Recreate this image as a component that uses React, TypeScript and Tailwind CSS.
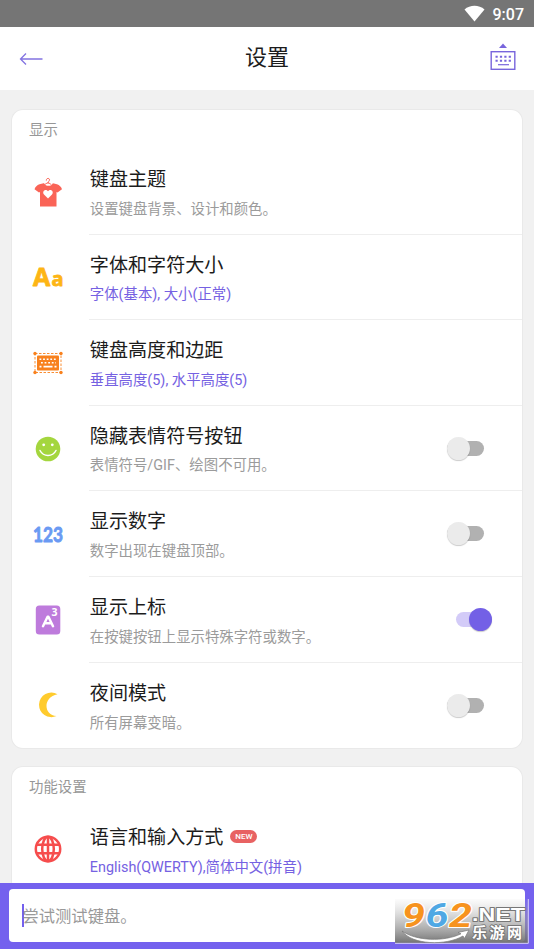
import { useState } from 'react';
import type { ReactNode } from 'react';

interface SettingItem {
  id: string;
  title: string;
  description: string;
  icon: ReactNode;
  highlighted?: boolean;
  toggle?: boolean;
  isNew?: boolean;
}

function ShirtIcon() {
  return (
    <svg width="28" height="30" viewBox="0 0 28 30">
      <path d="M12.300 3.200c0-2.600 3.400-2.400 3.200-.2-.1 1.200-1.500 1.300-1.500 3.400" fill="none" stroke="#fa6457" strokeWidth="1" strokeLinecap="round" />
      <path d="M9.600 6.200 5.500 7.200C3 8 1.300 9.800.5 12.300l4.500 3.200 1-.5V29.500h16.500V15l1 .5 4.500-3.200c-.8-2.500-2.500-4.300-5-5.100l-4.100-1c-1.400 3.400-7.400 3.400-8.800 0Z" fill="#fa6457" />
      <path d="M10.700 7.500 14 5.500l3.300 2" fill="none" stroke="#fa6457" strokeWidth=".9" />
      <path d="m14 21.500-4-4c-2.500-3.300 1.700-6.300 4-3.200 2.300-3.100 6.500-.1 4 3.200Z" fill="#fff" />
    </svg>
  );
}

function LettersIcon() {
  return (
    <svg width="34" height="40" viewBox="0 0 34 40" fontWeight="700" fill="#fdb515" stroke="#fdb515" strokeWidth=".8" strokeLinejoin="round" className="font-['Open_Sans',sans-serif]">
      <text x="2" y="29" fontSize="25">A</text>
      <text x="20.500" y="29" fontSize="20">a</text>
    </svg>
  );
}

function KeyboardSizeIcon() {
  return (
    <svg width="30" height="24" viewBox="0 0 30 24">
      <rect x="2" y="2.500" width="26" height="19" fill="none" stroke="#f8811d" strokeWidth=".9" strokeDasharray="2.500 1.500" />
      <g fill="#f8811d">
        <rect x="4" y="4.500" width="22" height="15" rx="1" />
        <circle cx="2" cy="2.500" r="1.700" />
        <circle cx="28" cy="2.500" r="1.700" />
        <circle cx="2" cy="21.500" r="1.700" />
        <circle cx="28" cy="21.500" r="1.700" />
      </g>
      <path d="M6.500 8.300h17.500M8 11.800h15" stroke="#fff" strokeWidth="1.500" strokeDasharray="1.800 1.800" />
      <path d="M6.500 15.600h2M10.500 15.600h9M21.500 15.600h2" stroke="#fff" strokeWidth="1.800" />
    </svg>
  );
}

function SmileIcon() {
  return (
    <svg width="26" height="26" viewBox="0 0 26 26">
      <circle cx="13" cy="13" r="12.300" fill="#a4d63e" />
      <circle cx="8.700" cy="8.800" r="1.400" fill="#fff" />
      <circle cx="17.300" cy="8.800" r="1.400" fill="#fff" />
      <path d="M5 14.500c3.500 6.700 12.500 6.700 16 0" fill="none" stroke="#fff" strokeWidth="1.500" strokeLinecap="round" />
    </svg>
  );
}

function NumbersIcon() {
  return (
    <svg width="34" height="36" viewBox="0 0 34 36">
      <text x="2" y="26" fontSize="21" fontWeight="700" fill="#6a9af3" stroke="#6a9af3" strokeWidth=".9" strokeLinejoin="round" className="font-['Lato',sans-serif]" textLength="30" lengthAdjust="spacingAndGlyphs">123</text>
    </svg>
  );
}

function SuperscriptIcon() {
  return (
    <svg width="26" height="30" viewBox="0 0 26 30">
      <rect x=".8" y=".5" width="24.500" height="29" rx="3.500" fill="#be7bdc" />
      <path d="m8 21.200 4.600-9.400h.8L18 21.200M9.800 18.300h6.500" fill="none" stroke="#fff" strokeWidth="2.500" strokeLinecap="round" strokeLinejoin="round" />
      <text x="16.500" y="11" fontSize="10.500" fontWeight="700" fill="#fff" className="font-['Open_Sans',sans-serif]">3</text>
    </svg>
  );
}

function MoonIcon() {
  return (
    <svg width="26" height="26" viewBox="0 0 26 26">
      <path d="M22.500 2.200A12.300 12.300 0 1 0 21.500 24C8.500 23.500 7.500 5 22.500 2.200Z" fill="#ffcb2d" />
    </svg>
  );
}

function GlobeIcon() {
  return (
    <svg width="28" height="28" viewBox="0 0 28 28" fill="none" stroke="#f64d4d" strokeWidth="2.500">
      <circle cx="14" cy="14" r="12.200" />
      <ellipse cx="14" cy="14" rx="5.800" ry="12.200" />
      <path d="M14 1.700v24.600M2.700 9.700h22.600M2.700 18.300h22.600" />
    </svg>
  );
}

const DISPLAY_SETTINGS: SettingItem[] = [
  { id: 'theme', title: '键盘主题', description: '设置键盘背景、设计和颜色。', icon: <ShirtIcon /> },
  { id: 'font', title: '字体和字符大小', description: '字体(基本), 大小(正常)', icon: <LettersIcon />, highlighted: true },
  { id: 'size', title: '键盘高度和边距', description: '垂直高度(5), 水平高度(5)', icon: <KeyboardSizeIcon />, highlighted: true },
  { id: 'emoji', title: '隐藏表情符号按钮', description: '表情符号/GIF、绘图不可用。', icon: <SmileIcon />, toggle: true },
  { id: 'numbers', title: '显示数字', description: '数字出现在键盘顶部。', icon: <NumbersIcon />, toggle: true },
  { id: 'superscript', title: '显示上标', description: '在按键按钮上显示特殊字符或数字。', icon: <SuperscriptIcon />, toggle: true },
  { id: 'night', title: '夜间模式', description: '所有屏幕变暗。', icon: <MoonIcon />, toggle: true },
];

const FUNCTION_SETTINGS: SettingItem[] = [
  { id: 'language', title: '语言和输入方式', description: 'English(QWERTY),简体中文(拼音)', icon: <GlobeIcon />, highlighted: true, isNew: true },
];

function Switch({ checked, onChange }: { checked: boolean; onChange: () => void }) {
  return (
    <button
      role="switch"
      aria-checked={checked}
      onClick={onChange}
      className={`flex h-6 w-[37px] shrink-0 items-center ${checked ? 'mr-[30px] justify-end' : 'mr-[38px]'}`}
    >
      <span
        className={`flex h-[15px] items-center rounded-full ${
          checked ? 'w-[36px] justify-end bg-[#d3cbf8]' : 'w-[37px] bg-[#b1b1b1]'
        }`}
      >
        <span
          className={`size-[23px] shrink-0 rounded-full shadow-[0_1px_1px_rgba(0,0,0,0.2)] ${
            checked ? 'bg-[#7360e6]' : 'bg-[#ebebeb]'
          }`}
        />
      </span>
    </button>
  );
}

interface SettingsCardProps {
  title: string;
  items: SettingItem[];
  enabled: Record<string, boolean>;
  onToggle: (id: string) => void;
}

function SettingsCard({ title, items, enabled, onToggle }: SettingsCardProps) {
  return (
    <section className="shrink-0 rounded-[11px] bg-white shadow-[0_0_0_1px_#e9e9e9]">
      <h2 className="h-[39.5px] pt-[11px] pl-[17px] text-[14.4px] leading-5 text-[#979797]">{title}</h2>
      {items.map((item, index) => (
        <div key={item.id} className="flex h-[85.6px]">
          <div className="flex w-[77px] shrink-0 items-center pl-[5px]">
            <div className="flex w-[62px] justify-center">{item.icon}</div>
          </div>
          <div
            className={`flex min-w-0 flex-1 items-center ${
              index < items.length - 1 ? 'border-b border-[#eeeeee]' : ''
            }`}
          >
            <div className="min-w-0 flex-1 pt-[5px] pl-[0.8px]">
              <div className="flex items-center">
                <h3 className="text-[19.1px] leading-7 text-[#1c1c1c]">{item.title}</h3>
                {item.isNew && (
                  <span className="mb-[3px] ml-[7px] flex h-[13px] w-[27px] items-center justify-center rounded-full bg-[#e86262] text-[8px] font-medium text-white">
                    NEW
                  </span>
                )}
              </div>
              <p className={`mt-[3.5px] text-[14.4px] leading-6 ${item.highlighted ? 'text-[#7561e2]' : 'text-[#9b9b9b]'}`}>
                {item.description}
              </p>
            </div>
            {item.toggle && <Switch checked={!!enabled[item.id]} onChange={() => onToggle(item.id)} />}
          </div>
        </div>
      ))}
    </section>
  );
}

function SiteBadge() {
  return (
    <svg className="absolute top-[16px] left-[395px]" width="138" height="50" viewBox="0 0 138 50">
      <defs>
        <linearGradient id="badge-bg" x2="0" y2="1">
          <stop offset="0" stopColor="#bbb" stopOpacity=".05" />
          <stop offset=".5" stopColor="#999" stopOpacity=".55" />
          <stop offset="1" stopColor="#6c6c6c" stopOpacity=".95" />
        </linearGradient>
      </defs>
      <rect width="133" height="44" fill="url(#badge-bg)" />
      <path d="M0 44.300h133.300V0" fill="none" stroke="#d7d2f8" strokeWidth="1" />
      <path d="M7 32c10 14 44 15 61 5l1.500 2.500L74 31l-11 2.500 3 1.300C49 43 21 42 7 32Z" fill="#fff" stroke="#777" strokeWidth=".7" />
      <g fontSize="33" fontWeight="700" fontStyle="italic" stroke="#fff" strokeWidth="2" paintOrder="stroke" strokeLinejoin="round" className="font-['Roboto',sans-serif]">
        <text x="7" y="28" fill="#f7931e" textLength="23" lengthAdjust="spacingAndGlyphs">9</text>
        <text x="30.500" y="28" fill="#4fa8e4" textLength="23" lengthAdjust="spacingAndGlyphs">6</text>
        <text x="54" y="28" fill="#f7931e" textLength="23" lengthAdjust="spacingAndGlyphs">2</text>
      </g>
      <g fontWeight="700" fill="#fff" stroke="#777" strokeWidth="1.800" paintOrder="stroke" strokeLinejoin="round">
        <text x="77" y="22" fontSize="17.500" className="font-['Liberation_Sans',sans-serif]" textLength="53" lengthAdjust="spacingAndGlyphs">.NET</text>
        <text x="77" y="39" fontSize="15" className="font-['Noto_Sans_CJK_SC',sans-serif]" textLength="50">乐游网</text>
      </g>
    </svg>
  );
}

export default function App() {
  const [enabled, setEnabled] = useState<Record<string, boolean>>({ superscript: true });
  const [text, setText] = useState('');

  const handleToggle = (id: string) => {
    setEnabled(prev => ({ ...prev, [id]: !prev[id] }));
  };

  return (
    <div lang="zh-CN" className="flex h-screen w-full flex-col overflow-hidden bg-[#f1f1f1] font-['Roboto','Noto_Sans_CJK_SC',sans-serif]">
      {/* Status bar */}
      <div className="flex h-[27px] shrink-0 items-center justify-end gap-2 bg-[#757575] pr-[10px] text-white">
        <svg width="21" height="17" viewBox="0 0 21 17">
          <path d="M.5 4.500C6-.5 15-.5 20.500 4.500L10.500 16.500Z" fill="#fff" />
        </svg>
        <span className="pt-[2px] text-[16px] font-medium">9:07</span>
      </div>

      {/* Header */}
      <header className="flex h-[63px] shrink-0 items-center justify-between bg-white pr-[18px] pl-[19px]">
        <button aria-label="返回" className="w-[26px]">
          <svg width="24" height="14" viewBox="0 0 24 14" fill="none" stroke="#8373e1" strokeWidth="1.300">
            <path d="M23.500 7H1.500M7 1.500 1.500 7 7 12.500" />
          </svg>
        </button>
        <h1 className="pr-px pb-[2px] text-[22px] text-[#1c1c1c]">设置</h1>
        <button aria-label="键盘" className="pb-[3px]">
          <svg width="26" height="28" viewBox="0 0 26 28" fill="none" stroke="#7865dc">
            <path d="m9 5 4-4.500L17 5Z" fill="#7865dc" stroke="none" />
            <rect x="1.200" y="8.700" width="23.600" height="17.600" strokeWidth="1.400" />
            <path d="M5.500 13.700h16M5.500 17.700h16" strokeWidth="2" strokeDasharray="2.200 2.200" />
            <path d="M8 21.700h11" strokeWidth="1.200" />
          </svg>
        </button>
      </header>

      <main className="flex min-h-0 flex-1 flex-col gap-[19px] overflow-hidden px-[12px] pt-[19.5px]">
        <SettingsCard title="显示" items={DISPLAY_SETTINGS} enabled={enabled} onToggle={handleToggle} />
        <SettingsCard title="功能设置" items={FUNCTION_SETTINGS} enabled={enabled} onToggle={handleToggle} />
      </main>

      {/* Test input */}
      <footer className="relative h-[66.5px] shrink-0 bg-[#7461ee] px-[9px] pt-[6.500px] pb-[7px]">
        <div className="flex h-full items-center rounded-[4px] bg-white pl-[13px]">
          <span className="h-[23px] w-[1.5px] bg-[#7461ee]" />
          <input
            value={text}
            onChange={(e) => setText(e.target.value)}
            placeholder="尝试测试键盘。"
            className="-ml-px w-80 pt-[3px] text-[16.3px] outline-none placeholder:text-[#999999]"
          />
        </div>
        <SiteBadge />
      </footer>
    </div>
  );
}
